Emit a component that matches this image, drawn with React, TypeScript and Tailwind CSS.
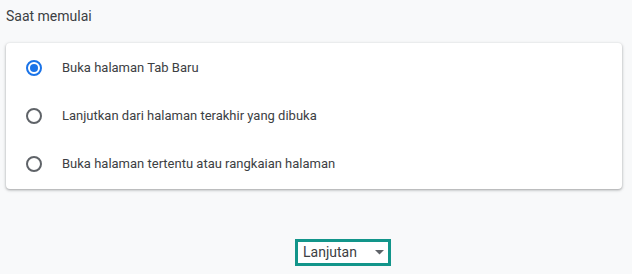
const options = [
  { label: "Buka halaman Tab Baru", checked: true },
  { label: "Lanjutkan dari halaman terakhir yang dibuka", checked: false },
  { label: "Buka halaman tertentu atau rangkaian halaman", checked: false },
];

const Radio = ({ checked }: { checked: boolean }) => (
  <div
    className={`w-4 h-4 rounded-full border-2 flex items-center justify-center shrink-0 ${
      checked ? "border-[#1a73e8]" : "border-[#5f6368]"
    }`}
  >
    {checked && <div className="w-2 h-2 rounded-full bg-[#1a73e8]" />}
  </div>
);

export default function App() {
  return (
    <div
      className="w-[632px] h-[274px] bg-[#f8f9fa] overflow-hidden"
      style={{ fontFamily: "Roboto, 'Liberation Sans', sans-serif" }}
    >
      {/* Section title */}
      <div className="h-[43px] pt-[6px] pl-[6px] text-[14px] leading-5 text-[#3c4043]">
        Saat memulai
      </div>

      {/* Options card */}
      <div className="ml-[6px] w-[616px] bg-white rounded-[4px] shadow-[0_1px_2px_rgba(60,64,67,0.3),0_1px_3px_1px_rgba(60,64,67,0.15)] pt-px pb-px">
        {options.map((opt) => (
          <div key={opt.label} className="h-12 flex items-center pl-5 gap-5">
            <Radio checked={opt.checked} />
            <span className="text-[13px] text-[#3c4043]">{opt.label}</span>
          </div>
        ))}
      </div>

      {/* Advanced toggle */}
      <div className="mt-[50px] pl-[295px]">
        <div className="w-[96px] h-[27px] border-[3px] border-[#12958a] bg-white flex items-center justify-between pl-[5px] pr-[4px]">
          <span className="text-[14px] text-[#3c4043]">Lanjutan</span>
          <svg width="9" height="5" viewBox="0 0 9 5">
            <path d="M0 0 L9 0 L4.5 4.5 Z" fill="#5f6368" />
          </svg>
        </div>
      </div>
    </div>
  );
}
